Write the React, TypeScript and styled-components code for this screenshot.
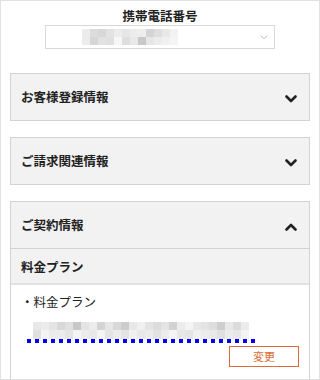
import React from 'react';
import styled, { createGlobalStyle } from 'styled-components';

const GlobalStyle = createGlobalStyle`
  body {
    margin: 0;
    background: #fff;
    font-family: "Noto Sans CJK JP", "Noto Sans", sans-serif;
    color: #222;
  }
`;

const phoneCells = [
  [236, 220, 216, 226, 236, 230, 236, 238, 212, 222, 232, 242],
  [236, 214, 226, 224, 246, 222, 232, 200, 230, 236, 240, 244],
];

const planCells = [
  [232, 236, 228, 216, 224, 200, 228, 236, 212, 230, 216, 204, 232, 240, 228, 220, 228, 210, 236, 244, 232, 228, 222, 206, 232, 220, 236],
  [224, 244, 236, 236, 228, 244, 236, 232, 244, 228, 236, 228, 240, 232, 236, 226, 236, 244, 232, 228, 240, 236, 232, 224, 236, 232, 244],
];

const Chevron = ({ up, light }: { up?: boolean; light?: boolean }) => (
  <svg
    width={light ? 8 : 12}
    height={light ? 5 : 8}
    viewBox="0 0 12 8"
    fill="none"
    stroke={light ? '#b0b0b0' : '#222'}
    strokeWidth={light ? 1.4 : 2.6}
    strokeLinecap="round"
    strokeLinejoin="round"
  >
    <path d={up ? 'M1.5 6.5 L6 2 L10.5 6.5' : 'M1.5 1.5 L6 6 L10.5 1.5'} />
  </svg>
);

const Mosaic = ({ cells, rowHeight }: { cells: number[][]; rowHeight: number }) => (
  <MosaicGrid $cols={cells[0].length} $row={rowHeight}>
    {cells.flat().map((g, i) => (
      <span key={i} style={{ background: `rgb(${g},${g},${g})` }} />
    ))}
  </MosaicGrid>
);

export default function App() {
  return (
    <>
      <GlobalStyle />
      <Frame>
        <PhoneBlock>
          <Title>携帯電話番号</Title>
          <Select>
            <Mosaic cells={phoneCells} rowHeight={8} />
            <Chevron light />
          </Select>
        </PhoneBlock>

        <Accordion>
          <Header>
            <span>お客様登録情報</span>
            <Chevron />
          </Header>
        </Accordion>

        <Accordion>
          <Header>
            <span>ご請求関連情報</span>
            <Chevron />
          </Header>
        </Accordion>

        <Accordion $open>
          <Header $open>
            <span>ご契約情報</span>
            <Chevron up />
          </Header>
          <SubHeader>料金プラン</SubHeader>
          <Body>
            <Item>・料金プラン</Item>
            <PlanLink>
              <Mosaic cells={planCells} rowHeight={8.5} />
            </PlanLink>
            <Actions>
              <ChangeButton>変更</ChangeButton>
            </Actions>
            <Divider />
          </Body>
        </Accordion>
      </Frame>
    </>
  );
}

const Frame = styled.div`
  width: 320px;
  height: 380px;
  box-sizing: border-box;
  border: 1px solid #e2e2e2;
  padding: 0 9px;
  overflow: hidden;
  background: #fff;
`;

const PhoneBlock = styled.div`
  display: flex;
  flex-direction: column;
  align-items: center;
  padding-top: 7px;
  margin-bottom: 24px;
`;

const Title = styled.div`
  font-size: 12.5px;
  font-weight: 700;
  line-height: 16px;
  margin-bottom: 1px;
`;

const Select = styled.div`
  width: 230px;
  height: 24px;
  box-sizing: border-box;
  border: 1px solid #d8d8d8;
  display: flex;
  align-items: center;
  justify-content: space-between;
  padding: 0 6px 0 36px;
`;

const MosaicGrid = styled.div<{ $cols: number; $row: number }>`
  display: grid;
  grid-template-columns: repeat(${(p) => p.$cols}, 8px);
  grid-auto-rows: ${(p) => p.$row}px;
`;

const Accordion = styled.div<{ $open?: boolean }>`
  border: 1px solid #d2d2d2;
  background: #f2f2f2;
  margin-bottom: 16px;
  ${(p) => p.$open && 'border-bottom: none; background: #fff; margin-bottom: 0;'}
`;

const Header = styled.div<{ $open?: boolean }>`
  height: 46px;
  display: flex;
  align-items: center;
  justify-content: space-between;
  padding: 0 12px 0 10px;
  background: #f2f2f2;
  font-size: 12.5px;
  font-weight: 700;
  line-height: 16px;
  ${(p) => p.$open && 'border-bottom: 1px solid #d2d2d2;'}

  svg {
    margin-top: 3px;
  }
`;

const SubHeader = styled.div`
  height: 34px;
  display: flex;
  align-items: center;
  padding: 0 10px;
  background: #f2f2f2;
  border-bottom: 2px solid #e2e2e2;
  font-size: 12.5px;
  font-weight: 700;
`;

const Body = styled.div`
  padding: 8px 10px 0 9px;
`;

const Item = styled.div`
  font-size: 12.5px;
  line-height: 18px;
  margin-left: 1px;
`;

const PlanLink = styled.div`
  display: inline-block;
  margin: 5px 0 0 7px;
  padding: 0 8px 4px 6px;
  background: linear-gradient(to right, #0000ee 4px, transparent 4px) left bottom / 8px 4px repeat-x;
`;

const Actions = styled.div`
  display: flex;
  justify-content: flex-end;
  margin-top: 3px;
`;

const ChangeButton = styled.button`
  width: 70px;
  height: 21px;
  box-sizing: border-box;
  border: 1.5px solid #dc6a35;
  background: #fff;
  color: #dc6a35;
  font-family: inherit;
  font-size: 11px;
  padding: 0;
`;

const Divider = styled.div`
  height: 1px;
  background: #cccccc;
  margin: 12px 0 0 1px;
`;
